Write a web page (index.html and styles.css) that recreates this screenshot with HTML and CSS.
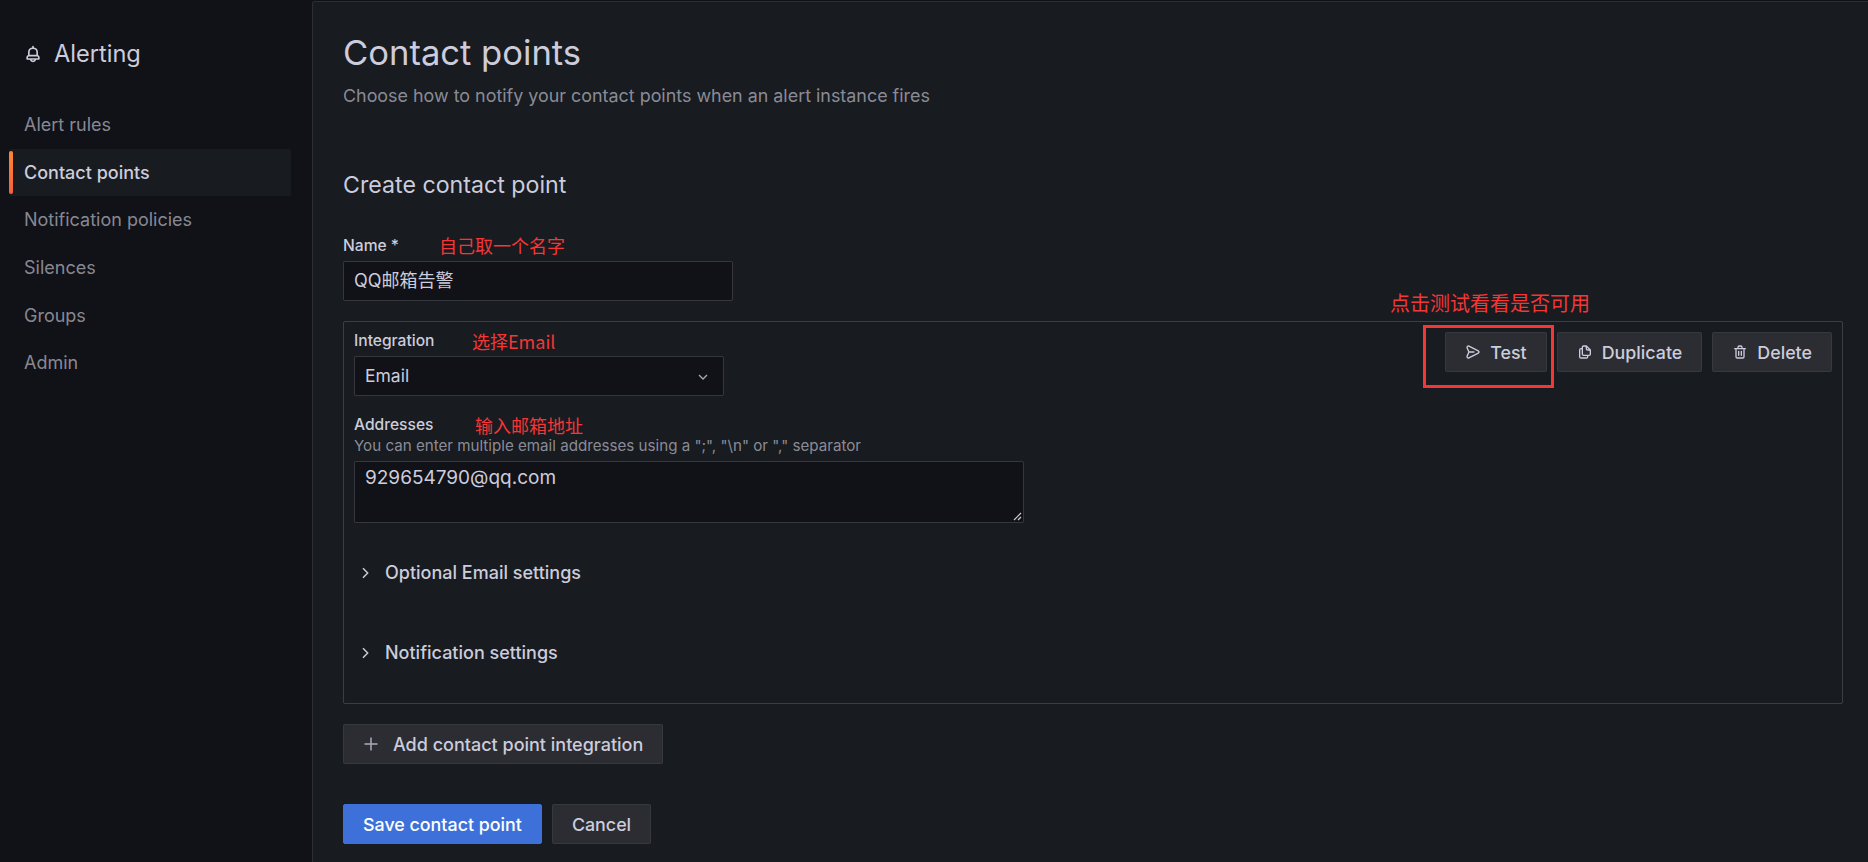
FILE: index.html
```html
<!DOCTYPE html>
<html lang="en">
<head>
<meta charset="utf-8">
<title>Contact points</title>
<link rel="stylesheet" href="styles.css">
</head>
<body>
<div class="app">
  <aside class="sidebar">
    <div class="brand">
      <svg class="icon brand-icon" viewBox="0 0 24 24"><path d="M18,13.18V10a6,6,0,0,0-5-5.91V3a1,1,0,0,0-2,0V4.09A6,6,0,0,0,6,10v3.18A3,3,0,0,0,4,16v2a1,1,0,0,0,1,1H8.14a4,4,0,0,0,7.72,0H19a1,1,0,0,0,1-1V16A3,3,0,0,0,18,13.18ZM8,10a4,4,0,0,1,8,0v3H8Zm4,10a2,2,0,0,1-1.72-1h3.44A2,2,0,0,1,12,20Zm6-3H6V16a1,1,0,0,1,1-1H17a1,1,0,0,1,1,1Z"/></svg>
      <span>Alerting</span>
    </div>
    <nav class="nav">
      <a class="nav-item">Alert rules</a>
      <a class="nav-item active">Contact points</a>
      <a class="nav-item">Notification policies</a>
      <a class="nav-item">Silences</a>
      <a class="nav-item">Groups</a>
      <a class="nav-item">Admin</a>
    </nav>
  </aside>
  <main class="panel">
    <h1 class="title">Contact points</h1>
    <p class="subtitle">Choose how to notify your contact points when an alert instance fires</p>
    <h2 class="section">Create contact point</h2>
    <label class="label name-label">Name *</label>
    <div class="field name-field">QQ邮箱告警</div>
    <section class="box">
      <div class="box-actions">
        <button class="btn"><svg class="icon" viewBox="0 0 24 24"><path d="M20.34,9.32l-14-7a3,3,0,0,0-4.08,3.9l2.4,5.37h0a1.06,1.06,0,0,1,0,.82l-2.4,5.37A3,3,0,0,0,5,22a3.14,3.14,0,0,0,1.35-.32l14-7a3,3,0,0,0,0-5.36Zm-.89,3.57-14,7a1,1,0,0,1-1.35-1.3l2.39-5.37A2,2,0,0,0,6.57,13h6.89a1,1,0,0,0,0-2H6.57a2,2,0,0,0-.08-.22L4.1,5.41a1,1,0,0,1,1.35-1.3l14,7a1,1,0,0,1,0,1.78Z"/></svg>Test</button>
        <button class="btn"><svg class="icon" viewBox="0 0 24 24"><path d="M21,8.94a1.31,1.31,0,0,0-.06-.27l0-.09a1.07,1.07,0,0,0-.19-.28h0l-6-6h0a1.07,1.07,0,0,0-.28-.19.32.32,0,0,0-.09,0A.88.88,0,0,0,14.05,2H10A3,3,0,0,0,7,5V6H6A3,3,0,0,0,3,9V19a3,3,0,0,0,3,3h8a3,3,0,0,0,3-3V18h1a3,3,0,0,0,3-3V9S21,9,21,8.94ZM15,5.41,17.59,8H16a1,1,0,0,1-1-1ZM15,19a1,1,0,0,1-1,1H6a1,1,0,0,1-1-1V9A1,1,0,0,1,6,8H7v7a3,3,0,0,0,3,3h5Zm4-4a1,1,0,0,1-1,1H10a1,1,0,0,1-1-1V5a1,1,0,0,1,1-1h3V7a3,3,0,0,0,3,3h3Z"/></svg>Duplicate</button>
        <button class="btn"><svg class="icon" viewBox="0 0 24 24"><path d="M10,18a1,1,0,0,0,1-1V11a1,1,0,0,0-2,0v6A1,1,0,0,0,10,18ZM20,6H16V5a3,3,0,0,0-3-3H11A3,3,0,0,0,8,5V6H4A1,1,0,0,0,4,8H5V19a3,3,0,0,0,3,3h8a3,3,0,0,0,3-3V8h1a1,1,0,0,0,0-2ZM10,5a1,1,0,0,1,1-1h2a1,1,0,0,1,1,1V6H10Zm7,14a1,1,0,0,1-1,1H8a1,1,0,0,1-1-1V8H17Zm-3-1a1,1,0,0,0,1-1V11a1,1,0,0,0-2,0v6A1,1,0,0,0,14,18Z"/></svg>Delete</button>
      </div>
      <label class="label">Integration</label>
      <div class="field select-field">Email
        <svg class="chev-down" viewBox="0 0 24 24"><path d="M6 9l6 6 6-6"/></svg>
      </div>
      <label class="label addr-label">Addresses</label>
      <div class="hint">You can enter multiple email addresses using a ";", "\n" or "," separator</div>
      <div class="field textarea-field">929654790@qq.com
        <svg class="grip" viewBox="0 0 10 10"><path d="M9 2L2 9M9 6L6 9"/></svg>
      </div>
      <div class="collapse first"><svg class="chev-right" viewBox="0 0 24 24"><path d="M9 5l7 7-7 7"/></svg>Optional Email settings</div>
      <div class="collapse"><svg class="chev-right" viewBox="0 0 24 24"><path d="M9 5l7 7-7 7"/></svg>Notification settings</div>
    </section>
    <button class="btn add"><svg class="plus" viewBox="0 0 16 16"><path d="M8 1.5v13M1.5 8h13"/></svg>Add contact point integration</button>
    <div class="form-actions">
      <button class="btn primary">Save contact point</button>
      <button class="btn">Cancel</button>
    </div>
  </main>
</div>
<div class="note note-name">自己取一个名字</div>
<div class="note note-integration">选择Email</div>
<div class="note note-address">输入邮箱地址</div>
<div class="note note-test">点击测试看看是否可用</div>
<div class="note-box"></div>
</body>
</html>
```
FILE: styles.css
```css
* { box-sizing: border-box; }
html, body { height: 100%; }
body {
  margin: 0;
  overflow: hidden;
  position: relative;
  background: #111217;
  color: #ccccdc;
  font-family: Inter, "Noto Sans CJK SC", sans-serif;
  font-size: 18px;
}
.app { display: flex; height: 862px; }
.icon { width: 16px; height: 16px; fill: currentColor; flex: none; }

.sidebar { width: 312px; flex: none; padding: 39px 21px 0 9px; }
.brand {
  display: flex;
  align-items: center;
  gap: 11px;
  padding-left: 14px;
  height: 30px;
  font-size: 23.6px;
  font-weight: 400;
  line-height: 30px;
}
.brand-icon { width: 20px; height: 20px; }
.nav { display: flex; flex-direction: column; margin-top: 32px; }
.nav-item {
  height: 47.6px;
  display: flex;
  align-items: center;
  padding-left: 15px;
  color: rgba(204, 204, 220, 0.65);
  font-weight: 400;
  border-radius: 2px;
  position: relative;
}
.nav-item.active { background: #181b1f; color: #ccccdc; font-weight: 500; }
.nav-item.active::before {
  content: "";
  position: absolute;
  left: 0;
  top: 2px;
  bottom: 2px;
  width: 4px;
  border-radius: 2px;
  background: linear-gradient(0deg, #f55f3e, #ff8833);
}

.panel {
  flex: 1;
  margin-top: 1px;
  padding: 29px 25px 0 30px;
  background: #181b1f;
  border-left: 1px solid #2c2e33;
  border-top: 1px solid #2c2e33;
  border-top-left-radius: 3px;
}
.title { margin: 0; font-size: 34.6px; font-weight: 400; line-height: 42px; }
.subtitle { margin: 12px 0 0; font-size: 17.9px; line-height: 22px; color: rgba(204, 204, 220, 0.65); }
.section { margin: 63px 0 0; font-size: 23.2px; font-weight: 400; line-height: 30px; }
.label { display: block; font-size: 15.6px; font-weight: 500; line-height: 18px; }
.name-label { margin-top: 37px; }
.field {
  background: #111217;
  border: 1px solid rgba(204, 204, 220, 0.2);
  border-radius: 2px;
  padding: 0 10px;
  line-height: 38px;
  position: relative;
}
.name-field { width: 390px; height: 40px; margin-top: 6px; }

.box {
  margin-top: 20px;
  width: 1500px;
  height: 383px;
  border: 1px solid rgba(204, 204, 220, 0.2);
  border-radius: 2px;
  padding: 10px;
  position: relative;
}
.box-actions { position: absolute; top: 10px; right: 10px; display: flex; gap: 10px; }
.btn {
  display: inline-flex;
  align-items: center;
  gap: 9px;
  height: 40px;
  padding: 0 19px;
  background: #2b2d33;
  border: 1px solid rgba(204, 204, 220, 0.08);
  border-radius: 2px;
  color: #ccccdc;
  font: 500 17.85px Inter, sans-serif;
}
.box .label { margin: 0; }
.select-field { width: 370px; height: 40px; margin-top: 6px; font-size: 17.5px; }
.chev-down { position: absolute; right: 12px; top: 12px; width: 16px; height: 16px; fill: none; stroke: rgba(204, 204, 220, 0.8); stroke-width: 2; }
.box .addr-label { margin-top: 20px; }
.hint { font-size: 15.15px; line-height: 18px; margin-top: 3px; color: rgba(204, 204, 220, 0.65); }
.textarea-field { width: 670px; height: 62px; margin-top: 6px; line-height: 24px; padding-top: 4px; font-size: 19px; }
.grip { position: absolute; right: 1px; bottom: 1px; width: 10px; height: 10px; fill: none; stroke: #ccccdc; stroke-width: 1.2; }
.collapse {
  display: flex;
  align-items: center;
  font-weight: 500;
  line-height: 24px;
  height: 24px;
  gap: 12px;
  padding-left: 3px;
  margin-top: 56px;
}
.collapse.first { margin-top: 38px; }
.chev-right { width: 16px; height: 16px; fill: none; stroke: #ccccdc; stroke-width: 2.2; flex: none; }
.add { margin-top: 20px; gap: 14px; font-size: 18px; }
.plus { width: 16px; height: 16px; fill: none; stroke: rgba(204,204,220,.8); stroke-width: 1.5; flex: none; }
.form-actions { display: flex; gap: 10px; margin-top: 40px; }
.primary { background: #3d71d9; border-color: #3d71d9; color: #fff; }

.note {
  position: absolute;
  color: #f53636;
  font-family: "Noto Sans CJK SC", sans-serif;
  font-size: 18px;
  font-weight: 400;
  line-height: 24px;
  white-space: nowrap;
}
.note-name { left: 439px; top: 233px; }
.note-integration { left: 472px; top: 329px; }
.note-address { left: 475px; top: 413px; }
.note-test { left: 1390px; top: 291px; font-size: 20px; }
.note-box { position: absolute; left: 1423px; top: 325px; width: 131px; height: 63px; border: 3px solid #f53636; }
```
